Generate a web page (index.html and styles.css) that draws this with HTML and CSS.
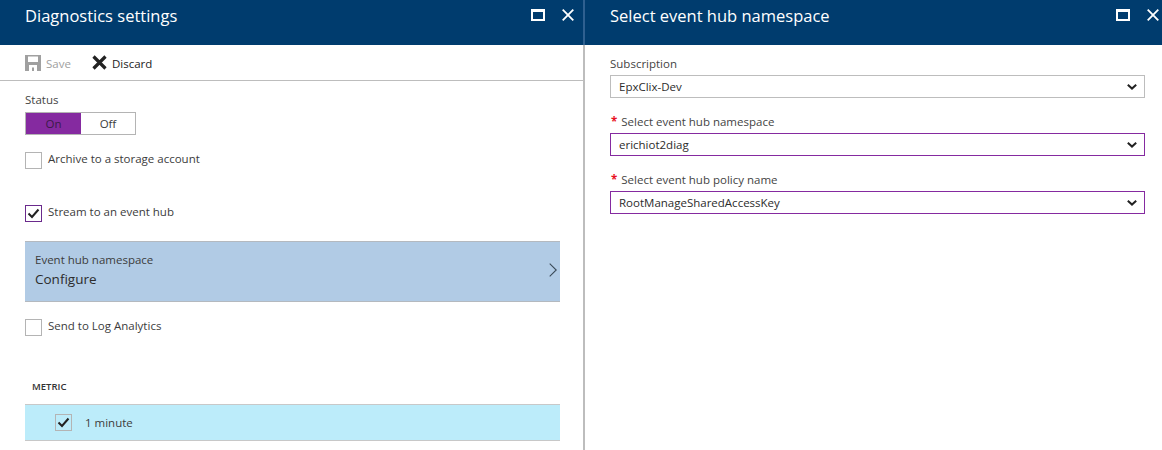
FILE: index.html
```html
<!DOCTYPE html>
<html lang="en">
<head>
    <meta charset="UTF-8">
    <title>Diagnostics settings</title>
    <link rel="stylesheet" href="styles.css">
</head>
<body>
    <section class="blade blade-left">
        <header class="blade-header">
            <h1>Diagnostics settings</h1>
            <div class="window-buttons">
                <span class="maximize"></span>
                <svg class="close" width="12" height="12" viewBox="0 0 12 12"><path d="M.7.7 11.3 11.3M11.3.7.7 11.3" stroke="#fff" stroke-width="1.8" fill="none"/></svg>
            </div>
        </header>
        <div class="toolbar">
            <div class="tool tool-disabled">
                <svg width="16" height="16" viewBox="0 0 16 16"><path fill="#a0a0a0" fill-rule="evenodd" d="M0 0H16V16H0Z M3 1.5V7H13V1.5Z M4 10V16H7V12.5H9V16H12V10Z"/></svg>
                <span>Save</span>
            </div>
            <div class="tool">
                <svg width="15" height="15" viewBox="0 0 15 15"><path d="M1.5 1.5 L13.5 13.5 M13.5 1.5 L1.5 13.5" stroke="#222" stroke-width="3.2" fill="none"/></svg>
                <span>Discard</span>
            </div>
        </div>
        <div class="content">
            <div class="label">Status</div>
            <div class="toggle">
                <div class="toggle-on">On</div>
                <div class="toggle-off">Off</div>
            </div>
            <div class="check-row first">
                <span class="checkbox"></span>
                <span>Archive to a storage account</span>
            </div>
            <div class="check-row stream">
                <span class="checkbox focused">
                    <svg width="13" height="11" viewBox="0 0 13 11"><path d="M1.5 5.5 L5 9 L11.5 1.5" stroke="#222" stroke-width="2" fill="none"/></svg>
                </span>
                <span>Stream to an event hub</span>
            </div>
            <div class="nav-row">
                <div class="nav-text">
                    <div class="nav-label">Event hub namespace</div>
                    <div class="nav-value">Configure</div>
                </div>
                <svg class="nav-arrow" width="8" height="14" viewBox="0 0 8 14"><path d="M.7.7 7.2 7 .7 13.3" stroke="#3a4a58" stroke-width="1.1" fill="none"/></svg>
            </div>
            <div class="check-row log">
                <span class="checkbox"></span>
                <span>Send to Log Analytics</span>
            </div>
            <div class="section-title">METRIC</div>
            <div class="metric-row">
                <span class="checkbox">
                    <svg width="13" height="11" viewBox="0 0 13 11"><path d="M1.5 5.5 L5 9 L11.5 1.5" stroke="#222" stroke-width="2" fill="none"/></svg>
                </span>
                <span>1 minute</span>
            </div>
        </div>
    </section>
    <section class="blade blade-right">
        <header class="blade-header">
            <h1>Select event hub namespace</h1>
            <div class="window-buttons">
                <span class="maximize"></span>
                <svg class="close" width="12" height="12" viewBox="0 0 12 12"><path d="M.7.7 11.3 11.3M11.3.7.7 11.3" stroke="#fff" stroke-width="1.8" fill="none"/></svg>
            </div>
        </header>
        <div class="form">
            <div class="field">
                <div class="label">Subscription</div>
                <div class="select">
                    <span>EpxClix-Dev</span>
                    <svg width="10" height="6" viewBox="0 0 10 6"><path d="M.8.8 5 4.6 9.2.8" stroke="#222" stroke-width="2" fill="none"/></svg>
                </div>
            </div>
            <div class="field">
                <div class="label"><span class="required">*</span>Select event hub namespace</div>
                <div class="select selected">
                    <span>erichiot2diag</span>
                    <svg width="10" height="6" viewBox="0 0 10 6"><path d="M.8.8 5 4.6 9.2.8" stroke="#222" stroke-width="2" fill="none"/></svg>
                </div>
            </div>
            <div class="field">
                <div class="label"><span class="required">*</span>Select event hub policy name</div>
                <div class="select selected">
                    <span>RootManageSharedAccessKey</span>
                    <svg width="10" height="6" viewBox="0 0 10 6"><path d="M.8.8 5 4.6 9.2.8" stroke="#222" stroke-width="2" fill="none"/></svg>
                </div>
            </div>
        </div>
    </section>
</body>
</html>
```

FILE: styles.css
```css
html, body {
    margin: 0;
    padding: 0;
}
body {
    display: flex;
    width: 1162px;
    height: 450px;
    overflow: hidden;
    background: #fff;
    color: #3c3c3c;
    font-family: "Open Sans", Arial, sans-serif;
    font-size: 11.5px;
}
.blade {
    box-sizing: border-box;
    height: 450px;
}
.blade-left {
    width: 585px;
    border-right: 2px solid #bdbdbd;
}
.blade-right {
    flex: 1;
}
.blade-header {
    display: flex;
    align-items: flex-start;
    justify-content: space-between;
    height: 45px;
    background: #003c6e;
    color: #fff;
}
.blade-left .blade-header {
    margin-right: -2px;
    padding: 0 9px 0 25px;
    border-right: 2px solid #2f6090;
}
.blade-right .blade-header {
    padding: 0 3px 0 25px;
}
.blade-header h1 {
    margin: 0;
    font-size: 16.5px;
    font-weight: 400;
    line-height: 31px;
}
.window-buttons {
    display: flex;
    align-items: center;
    gap: 17px;
    height: 30px;
}
.maximize {
    box-sizing: border-box;
    width: 14px;
    height: 12px;
    border: 2px solid #fff;
    border-top-width: 3px;
}
.toolbar {
    display: flex;
    align-items: center;
    gap: 21px;
    box-sizing: border-box;
    height: 36px;
    padding: 0 0 0 25px;
    border-bottom: 1px solid #bdbdbd;
    color: #222;
}
.tool {
    display: flex;
    align-items: center;
    gap: 5px;
}
.tool span {
    padding-top: 2px;
}
.tool-disabled {
    color: #a0a0a0;
}
.content {
    padding: 11px 23px 0 25px;
}
.label {
    line-height: 16px;
    color: #444;
}
.toggle {
    display: flex;
    box-sizing: border-box;
    width: 111px;
    height: 23px;
    margin-top: 4px;
    border: 1px solid #b4b4b4;
    text-align: center;
    line-height: 21px;
}
.toggle-on {
    width: 55px;
    background: #852aa0;
    color: #3b1a4a;
}
.toggle-off {
    flex: 1;
}
.check-row {
    display: flex;
    align-items: flex-start;
    gap: 6px;
    line-height: 14px;
}
.check-row.first {
    margin-top: 17px;
}
.check-row.stream {
    margin-top: 36px;
}
.check-row.log {
    margin-top: 17px;
}
.checkbox {
    display: flex;
    align-items: center;
    justify-content: center;
    box-sizing: border-box;
    width: 17px;
    height: 17px;
    border: 1px solid #b4b4b4;
    flex-shrink: 0;
}
.checkbox.focused {
    border-color: #6a2a8c;
}
.nav-row {
    display: flex;
    align-items: center;
    justify-content: space-between;
    box-sizing: border-box;
    height: 61px;
    margin-top: 19px;
    padding: 0 3px 0 10px;
    background: #b1cbe5;
    border-top: 1px solid #b4b9bf;
    border-bottom: 1px solid #b4b9bf;
}
.nav-text {
    padding-bottom: 3px;
}
.nav-arrow {
    margin-bottom: 3px;
}
.nav-label {
    line-height: 16px;
}
.nav-value {
    margin-top: 2px;
    font-size: 13.5px;
    line-height: 18px;
    color: #2c2c2c;
}
.section-title {
    margin-top: 44px;
    padding-left: 7px;
    font-size: 9.5px;
    font-weight: 600;
    line-height: 14px;
    color: #333;
}
.metric-row {
    display: flex;
    align-items: center;
    gap: 13px;
    box-sizing: border-box;
    height: 37px;
    margin-top: 10px;
    padding-left: 30px;
    background: #bcecfa;
    border-top: 1px solid #c8c8c8;
    border-bottom: 1px solid #c8c8c8;
}
.form {
    padding: 11px 17px 0 25px;
}
.field {
    margin-bottom: 16px;
}
.required {
    margin-right: 4px;
    margin-left: 1px;
    color: #e81123;
    font-weight: 700;
}
.select {
    display: flex;
    align-items: center;
    justify-content: space-between;
    box-sizing: border-box;
    height: 23px;
    margin-top: 3px;
    padding: 0 7px 0 8px;
    border: 1px solid #bdbdbd;
    color: #2c2c2c;
}
.select.selected {
    border-color: #852aa0;
}
```
